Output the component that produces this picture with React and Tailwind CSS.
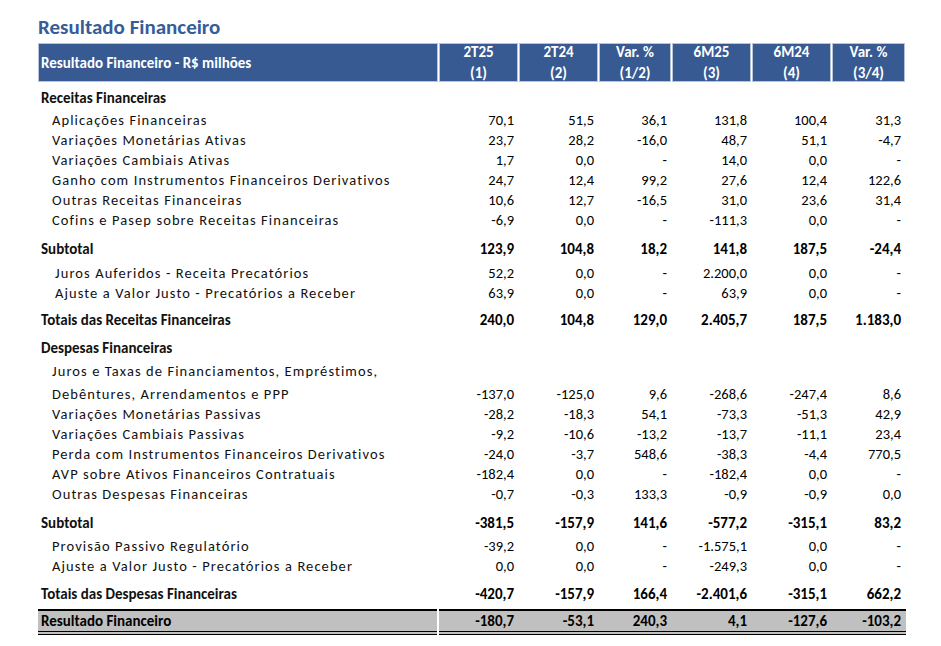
import React from 'react';

const COLS = 'grid grid-cols-[400px_79px_79px_72px_79px_79px_73px] gap-x-px';

// kind: section = bold heading without values, item = indented line, total = bold line with values
const ROWS = [
  { kind: 'section', label: 'Receitas Financeiras', mt: 'mt-[7px]' },
  { kind: 'item', label: 'Aplicações Financeiras', v: ['70,1', '51,5', '36,1', '131,8', '100,4', '31,3'], mt: 'mt-[2px]' },
  { kind: 'item', label: 'Variações Monetárias Ativas', v: ['23,7', '28,2', '-16,0', '48,7', '51,1', '-4,7'] },
  { kind: 'item', label: 'Variações Cambiais Ativas', v: ['1,7', '0,0', '-', '14,0', '0,0', '-'] },
  { kind: 'item', label: 'Ganho com Instrumentos Financeiros Derivativos', v: ['24,7', '12,4', '99,2', '27,6', '12,4', '122,6'] },
  { kind: 'item', label: 'Outras Receitas Financeiras', v: ['10,6', '12,7', '-16,5', '31,0', '23,6', '31,4'] },
  { kind: 'item', label: 'Cofins e Pasep sobre Receitas Financeiras', v: ['-6,9', '0,0', '-', '-111,3', '0,0', '-'] },
  { kind: 'total', label: 'Subtotal', v: ['123,9', '104,8', '18,2', '141,8', '187,5', '-24,4'], mt: 'mt-[9px]' },
  { kind: 'item', deep: true, label: 'Juros Auferidos - Receita Precatórios', v: ['52,2', '0,0', '-', '2.200,0', '0,0', '-'], mt: 'mt-[4px]' },
  { kind: 'item', deep: true, label: 'Ajuste a Valor Justo - Precatórios a Receber', v: ['63,9', '0,0', '-', '63,9', '0,0', '-'] },
  { kind: 'total', label: 'Totais das Receitas Financeiras', v: ['240,0', '104,8', '129,0', '2.405,7', '187,5', '1.183,0'], mt: 'mt-[7px]' },
  { kind: 'section', label: 'Despesas Financeiras', mt: 'mt-[8px]' },
  { kind: 'item', label: 'Juros e Taxas de Financiamentos, Empréstimos,', mt: 'mt-[3px]' },
  { kind: 'item', label: 'Debêntures, Arrendamentos e PPP', v: ['-137,0', '-125,0', '9,6', '-268,6', '-247,4', '8,6'], mt: 'mt-[3px]' },
  { kind: 'item', label: 'Variações Monetárias Passivas', v: ['-28,2', '-18,3', '54,1', '-73,3', '-51,3', '42,9'] },
  { kind: 'item', label: 'Variações Cambiais Passivas', v: ['-9,2', '-10,6', '-13,2', '-13,7', '-11,1', '23,4'] },
  { kind: 'item', label: 'Perda com Instrumentos Financeiros Derivativos', v: ['-24,0', '-3,7', '548,6', '-38,3', '-4,4', '770,5'] },
  { kind: 'item', label: 'AVP sobre Ativos Financeiros Contratuais', v: ['-182,4', '0,0', '-', '-182,4', '0,0', '-'] },
  { kind: 'item', label: 'Outras Despesas Financeiras', v: ['-0,7', '-0,3', '133,3', '-0,9', '-0,9', '0,0'] },
  { kind: 'total', label: 'Subtotal', v: ['-381,5', '-157,9', '141,6', '-577,2', '-315,1', '83,2'], mt: 'mt-[9px]' },
  { kind: 'item', label: 'Provisão Passivo Regulatório', v: ['-39,2', '0,0', '-', '-1.575,1', '0,0', '-'], mt: 'mt-[3px]' },
  { kind: 'item', label: 'Ajuste a Valor Justo - Precatórios a Receber', v: ['0,0', '0,0', '-', '-249,3', '0,0', '-'] },
  { kind: 'total', label: 'Totais das Despesas Financeiras', v: ['-420,7', '-157,9', '166,4', '-2.401,6', '-315,1', '662,2'], mt: 'mt-[8px]' },
];

const HEAD = [
  ['2T25', '(1)'],
  ['2T24', '(2)'],
  ['Var. %', '(1/2)'],
  ['6M25', '(3)'],
  ['6M24', '(4)'],
  ['Var. %', '(3/4)'],
];

function Row({ row }) {
  const bold = row.kind !== 'item';
  const pad = row.kind === 'item' ? (row.deep ? 'pl-[17px]' : 'pl-[14px]') : 'pl-[3px]';
  return (
    <div className={`${COLS} h-[20px] items-center ${row.mt ?? ''}`}>
      <div
        className={`${pad} whitespace-nowrap ${
          bold ? 'font-bold text-[15px]' : 'text-[14.5px] tracking-[0.075em]'
        } text-[#111]`}
      >
        {row.label}
      </div>
      {(row.v ?? []).map((val, i) => (
        <div
          key={i}
          className={`pr-[4px] text-right text-black ${bold ? 'font-bold text-[15px]' : 'text-[14.5px]'}`}
        >
          {val}
        </div>
      ))}
    </div>
  );
}

export default function App() {
  return (
    <div className="min-h-screen w-[941px] bg-white pl-[38px] pt-[14px] font-['Carlito','Calibri','Lato',sans-serif] leading-none">
      <h1 className="text-[21px] font-bold text-[#365c99] h-[29px] pb-[3px] flex items-center">Resultado Financeiro</h1>

      {/* header band */}
      <div className={`${COLS} h-[38px] text-white font-bold text-[15px]`}>
        <div className="bg-[#375a92] border border-[#b7c3d8] flex items-center pl-[2px] pt-[2px]">
          Resultado Financeiro - R$ milhões
        </div>
        {HEAD.map(([a, b], i) => (
          <div
            key={i}
            className="bg-[#375a92] border border-[#b7c3d8] flex flex-col items-center justify-center gap-[6px] pt-[1px]"
          >
            <span>{a}</span>
            <span>{b}</span>
          </div>
        ))}
      </div>

      {ROWS.map((row, i) => (
        <Row key={i} row={row} />
      ))}

      {/* bottom line */}
      <div className="grid grid-cols-[399px_1fr] gap-x-[2px] w-[868px] mt-[5px] h-[26px] font-bold text-[15px] text-black">
        <div className="bg-[#c0c0c0] border-t-2 border-b-[4px] border-black border-double flex items-center pl-[3px]">
          Resultado Financeiro
        </div>
        <div className="bg-[#c0c0c0] border-t-2 border-b-[4px] border-black border-double">
          <div className="grid grid-cols-[79px_79px_72px_79px_79px_73px] gap-x-px h-full items-center">
            {['-180,7', '-53,1', '240,3', '4,1', '-127,6', '-103,2'].map((val, i) => (
              <div key={i} className="pr-[4px] text-right">
                {val}
              </div>
            ))}
          </div>
        </div>
      </div>
    </div>
  );
}
